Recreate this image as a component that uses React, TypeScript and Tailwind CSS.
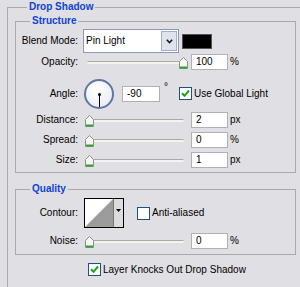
import React from "react";

const Thumb = () => (
  <svg width="9" height="12" viewBox="0 0 9 12">
    <path d="M0.5 4.5 L4.5 0.5 L8.5 4.5 V11.5 H0.5 Z" fill="#f6f6f2" stroke="#8e8e8e" />
    <path d="M1 10.5 H8" stroke="#2ea62e" strokeWidth="2" />
  </svg>
);

function Slider({ atEnd }: { atEnd?: boolean }) {
  return (
    <div className="relative ml-[6px] h-[16px] w-[104px]">
      <div className="absolute left-[3px] right-[4px] top-[7px] h-[3px] rounded-full border-t border-[#aaa9a3] bg-[#f4f3ee]" />
      <div className={`absolute top-[3px] ${atEnd ? "right-0" : "left-[1px]"}`}>
        <Thumb />
      </div>
    </div>
  );
}

function NumBox({ value }: { value: string }) {
  return (
    <div className="flex h-[16px] w-[37px] items-center border border-[#aeb2b8] bg-white pl-[4px]">
      {value}
    </div>
  );
}

function Check({ on }: { on?: boolean }) {
  return (
    <span className="flex h-[13px] w-[13px] items-center justify-center border border-[#1c5180] bg-white">
      {on && (
        <svg width="9" height="9" viewBox="0 0 9 9">
          <path d="M1 4.2 L3.5 6.8 L8 1.5" fill="none" stroke="#21a121" strokeWidth="2" />
        </svg>
      )}
    </span>
  );
}

function SliderRow({ label, value, unit, atEnd }: { label: string; value: string; unit: string; atEnd?: boolean }) {
  return (
    <div className="flex h-[16px] items-center">
      <div className="w-[62px] text-right">{label}</div>
      <Slider atEnd={atEnd} />
      <div className="ml-[3px]">
        <NumBox value={value} />
      </div>
      <span className="ml-[2px]">{unit}</span>
    </div>
  );
}

export default function App() {
  return (
    <div className="h-[287px] w-[300px] overflow-hidden bg-[#e0dfe3] font-['Liberation_Sans',Arial,sans-serif] text-[10px] leading-[16px] text-black">
      <fieldset className="ml-[7px] w-[320px] border border-[#a9a8ad] pb-[30px] pl-[7px]">
        <legend className="ml-[12px] px-[2px] text-[10px] font-bold leading-[14px] text-[#0f44d6]">
          Drop Shadow
        </legend>

        {/* Structure */}
        <fieldset className="w-[281px] border border-[#a9a8ad] pb-[4px]">
          <legend className="ml-[14px] px-[2px] font-bold leading-[14px] text-[#0f44d6]">Structure</legend>

          <div className="mt-[1px] flex h-[24px] items-center">
            <div className="w-[62px] text-right">Blend Mode:</div>
            <div className="ml-[5px] flex h-[24px] w-[96px] items-center justify-between border border-[#8a99b4] bg-white pl-[2px] pr-[1px]">
              <span>Pin Light</span>
              <span className="flex h-[20px] w-[16px] items-center justify-center border border-[#a4aecb] bg-[#dfe3ee]">
                <svg width="7" height="5" viewBox="0 0 7 5">
                  <path d="M0.8 0.8 L3.5 3.6 L6.2 0.8" fill="none" stroke="#1a1a1a" strokeWidth="1.6" />
                </svg>
              </span>
            </div>
            <div className="ml-[3px] h-[15px] w-[30px] border border-[#555] bg-black" />
          </div>

          <div className="mt-[1px]">
            <SliderRow label="Opacity:" value="100" unit="%" atEnd />
          </div>

          <div className="mt-[8px] flex h-[31px] items-center">
            <div className="w-[62px] text-right">Angle:</div>
            <div className="relative ml-[6px] h-[30px] w-[30px] rounded-full border-2 border-[#5d76a6] bg-[radial-gradient(circle_at_40%_35%,#ffffff,#e6e8ee)]">
              <div className="absolute left-[12px] top-[12px] h-[3px] w-[3px] rounded-full bg-black" />
              <div className="absolute left-[13px] top-[13px] h-[13px] w-[1px] bg-black" />
            </div>
            <div className="ml-[8px] flex h-[16px] w-[38px] items-center border border-[#aeb2b8] bg-white pl-[4px]">-90</div>
            <span className="w-[19px] self-start pl-[4px] pt-[4px] leading-[10px]">°</span>
            <Check on />
            <span className="ml-[2px]">Use Global Light</span>
          </div>

          <div className="mt-[3px]">
            <SliderRow label="Distance:" value="2" unit="px" />
          </div>
          <div className="mt-[4px]">
            <SliderRow label="Spread:" value="0" unit="%" />
          </div>
          <div className="mt-[4px]">
            <SliderRow label="Size:" value="1" unit="px" />
          </div>
        </fieldset>

        {/* Quality */}
        <fieldset className="mt-[9px] w-[281px] border border-[#a9a8ad] pb-[5px]">
          <legend className="ml-[14px] px-[2px] font-bold leading-[14px] text-[#0f44d6]">Quality</legend>

          <div className="mt-[2px] flex h-[30px] items-center">
            <div className="w-[62px] text-right">Contour:</div>
            <div className="ml-[6px] flex h-[30px] w-[40px] border border-black bg-white">
              <svg width="28" height="28" viewBox="0 0 28 28" className="block">
                <path d="M0 28 L28 0 V28 Z" fill="#9c9c9c" />
              </svg>
              <div className="flex w-[10px] justify-center border-l border-[#777] bg-[#dcdcdc] pt-[10px]">
                <svg width="5" height="3" viewBox="0 0 5 3">
                  <path d="M0 0 H5 L2.5 3 Z" fill="#000" />
                </svg>
              </div>
            </div>
            <div className="ml-[13px]">
              <Check />
            </div>
            <span className="ml-[2px]">Anti-aliased</span>
          </div>

          <div className="mt-[5px]">
            <SliderRow label="Noise:" value="0" unit="%" />
          </div>
        </fieldset>

        <div className="mt-[8px] flex h-[13px] items-center pl-[73px]">
          <Check on />
          <span className="ml-[2px]">Layer Knocks Out Drop Shadow</span>
        </div>
      </fieldset>
    </div>
  );
}
